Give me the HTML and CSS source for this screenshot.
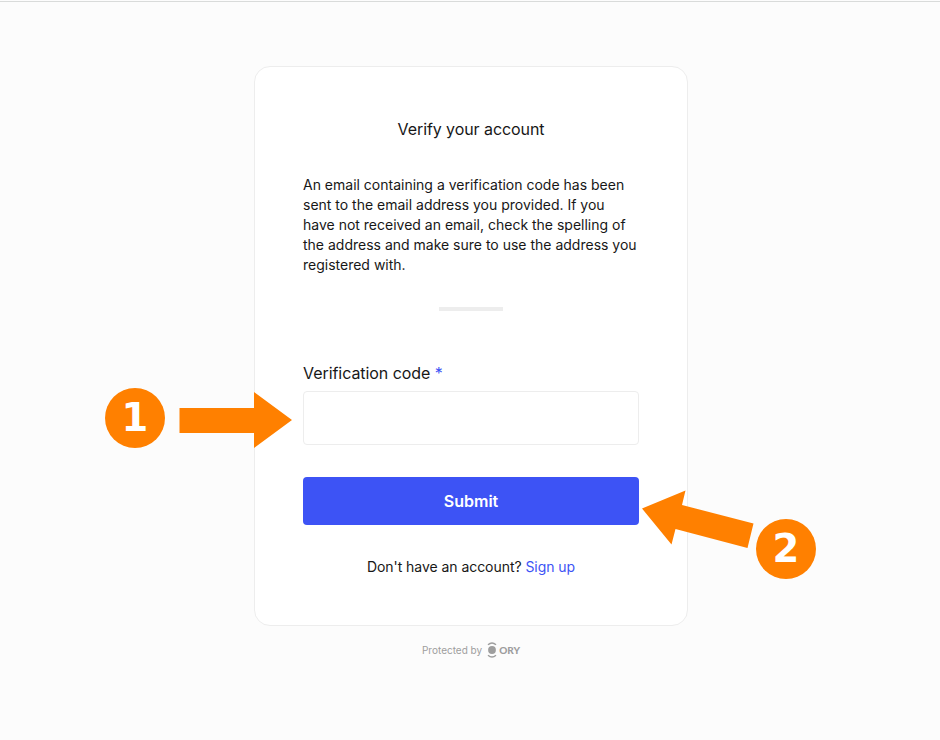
FILE: index.html
```html
<!DOCTYPE html>
<html lang="en">
<head>
<meta charset="utf-8">
<title>Verify your account</title>
<link rel="stylesheet" href="styles.css">
</head>
<body>
<main class="page">
  <section class="card">
    <h1 class="title">Verify your account</h1>
    <p class="message">An email containing a verification code has been sent to the email address you provided. If you have not received an email, check the spelling of the address and make sure to use the address you registered with.</p>
    <hr class="divider">
    <form class="form">
      <label class="label" for="code">Verification code <span class="required">*</span></label>
      <input class="input" id="code" type="text">
      <button class="submit" type="button">Submit</button>
    </form>
    <p class="signup">Don't have an account? <a class="link" href="#">Sign up</a></p>
  </section>
  <footer class="footer">
    <span>Protected by</span>
    <svg class="mark" width="10" height="16" viewBox="0 0 10 16">
      <circle cx="5" cy="8" r="3.9"/>
      <path d="M1 2.700Q5-.7 9 2.700M1 13.300Q5 16.700 9 13.300"/>
    </svg>
    <span class="brand">ORY</span>
  </footer>
</main>
<svg class="arrows" width="940" height="740" viewBox="0 0 940 740">
  <path d="M179.500 408H254V392L292 420L254 448V433H179.500Z"/>
  <path d="M642 508.500L685.500 490.500L682 505L753.500 523.500L747.500 548L675.500 529L671.500 544.500Z"/>
</svg>
<div class="step step-one">1</div>
<div class="step step-two">2</div>
</body>
</html>
```
FILE: styles.css
```css
* { box-sizing: border-box; }
body {
  margin: 0;
  height: 740px;
  overflow: hidden;
  background: #fcfcfc;
  color: #171717;
  font-family: Inter, sans-serif;
}
.page {
  height: 739px;
  margin-top: 1px;
  padding: 64px 0 0 2px;
  border-top: 1px solid #d9dbda;
  display: flex;
  flex-direction: column;
  align-items: center;
}
.card {
  width: 434px;
  height: 560px;
  padding: 48px;
  background: #fff;
  border: 1px solid #ededed;
  border-radius: 16px;
}
.title {
  margin: 0 0 32px;
  font-size: 16px;
  line-height: 28px;
  font-weight: 400;
  letter-spacing: -0.08px;
  text-align: center;
}
.message {
  margin: 0;
  font-size: 14px;
  line-height: 20px;
}
.divider {
  width: 64px;
  height: 4px;
  margin: 32px auto 50px;
  border: 0;
  background: #ededed;
}
.form { display: flex; flex-direction: column; }
.label { font-size: 16px; line-height: 24px; margin-bottom: 6px; letter-spacing: -0.06px; }
.required, .link { color: #3d53f5; text-decoration: none; }
.input {
  height: 54px;
  padding: 0 16px;
  border: 1px solid #ededed;
  border-radius: 4px;
  background: #fff;
  font: 16px Inter, sans-serif;
}
.submit {
  height: 48px;
  margin-top: 32px;
  border: 0;
  border-radius: 4px;
  background: #3d53f5;
  color: #fff;
  font: 600 16px/24px Inter, sans-serif;
}
.signup {
  margin: 32px 0 0;
  font-size: 14px;
  line-height: 20px;
  letter-spacing: -0.05px;
  text-align: center;
}
.footer {
  display: flex;
  align-items: center;
  height: 16px;
  margin-top: 16px;
  font-size: 10px;
  line-height: 16px;
  color: #9e9e9e;
}
.mark { margin: 0 2px 0 5px; fill: #9e9e9e; }
.mark path { fill: none; stroke: #9e9e9e; stroke-width: 1.4; }
.brand { font: 900 10px/16px Lato, sans-serif; }
.arrows { position: absolute; left: 0; top: 0; fill: #ff8000; pointer-events: none; }
.step {
  position: absolute;
  width: 60px;
  height: 60px;
  border-radius: 50%;
  background: #ff8000;
  color: #fff;
  font: bold 38.5px/60px "DejaVu Sans", sans-serif;
  text-align: center;
}
.step-one { left: 105px; top: 388px; }
.step-two { left: 756px; top: 519px; }
```
